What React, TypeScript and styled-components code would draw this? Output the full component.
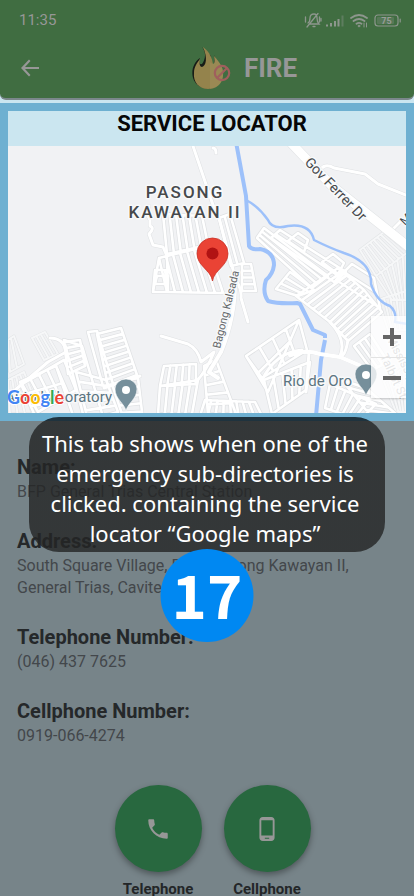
import React from "react";
import styled, { createGlobalStyle } from "styled-components";

const GlobalStyle = createGlobalStyle`
  * { box-sizing: border-box; }
  body { margin: 0; background: #778489; font-family: Roboto, "Liberation Sans", sans-serif; }
  h1, h2, p, dl, dt, dd { margin: 0; }
  button { border: 0; padding: 0; font: inherit; cursor: pointer; }
`;

const Page = styled.div`
  min-height: 100vh;
  overflow: hidden;
  background: #778489;
`;

const Header = styled.header`
  background: #406d41;
  color: #979797;
  border-bottom: 2px solid #7b878b;
  border-radius: 0 0 6px 6px;
  height: 100px;
`;

const StatusBar = styled.div`
  display: flex;
  align-items: center;
  justify-content: space-between;
  height: 40px;
  padding: 0 13px 0 19px;
  font-size: 15px;
  line-height: 20px;
`;

const StatusIcons = styled.svg`
  width: 100px;
  height: 18px;
`;

const AppBar = styled.div`
  display: grid;
  grid-template-columns: 24px 1fr 24px;
  align-items: center;
  padding: 0 16px 0 18px;
  height: 56px;
`;

const BackButton = styled.button`
  display: flex;
  background: none;
  color: inherit;
`;

const Brand = styled.div`
  display: flex;
  align-items: center;
  justify-content: center;
  gap: 13px;
  padding-left: 72px;
`;

const Title = styled.h1`
  font-size: 26px;
  line-height: 32px;
  font-weight: 700;
`;

const HeaderBack = styled.div`
  background: #cbe6f0;
  padding-bottom: 3px;
`;

const Locator = styled.section`
  background: #6eb0d1;
  padding: 8px;
`;

const LocatorTitle = styled.h2`
  background: #cbe6f0;
  color: #060708;
  text-align: center;
  font-size: 22px;
  line-height: 26px;
  padding: 0 0 9px 10px;
  font-weight: 700;
`;

const MapFrame = styled.div`
  position: relative;
  height: 267px;
  overflow: hidden;
  background: #f1f2f4;
`;

const MapDrawing = styled.svg`
  display: block;
  width: 100%;
  height: 100%;
`;

const ZoomControls = styled.div`
  position: absolute;
  right: 0;
  bottom: 15px;
  width: 35px;
  background: rgba(255, 255, 255, 0.78);
  box-shadow: 0 1px 2px rgba(0, 0, 0, 0.2);
`;

const ZoomButton = styled.button`
  display: flex;
  align-items: center;
  justify-content: flex-end;
  width: 100%;
  height: 41px;
  padding-right: 5px;
  background: none;
  color: #666;

  & + & { border-top: 1px solid #e3e3e3; }
`;

const Details = styled.main`
  position: relative;
  padding: 32px 17px 0;
`;

const Contacts = styled.dl`
  display: grid;
  gap: 24px;
`;

const Label = styled.dt`
  color: #25282a;
  font-size: 20px;
  line-height: 28px;
  font-weight: 700;
`;

const Value = styled.dd`
  color: #43474b;
  font-size: 16px;
  line-height: 22px;
`;

const Actions = styled.div`
  display: flex;
  justify-content: center;
  gap: 22px;
  margin-top: 38px;
  padding-left: 11px;
`;

const CallButton = styled.button`
  display: grid;
  justify-items: center;
  gap: 10px;
  width: 87px;
  background: none;
  color: #232628;
  font-size: 15px;
  line-height: 14px;
  font-weight: 700;
  white-space: nowrap;
`;

const Disc = styled.span`
  display: grid;
  place-items: center;
  width: 87px;
  height: 87px;
  border-radius: 50%;
  background: #28683f;
  color: #979797;
  box-shadow: 0 3px 6px rgba(0, 0, 0, 0.35);
`;

const Callout = styled.aside`
  position: absolute;
  top: -4px;
  left: 50%;
  transform: translateX(-50%);
  width: 356px;
  padding: 11px 4px 4px 0;
  border-radius: 30px;
  background: linear-gradient(#1f333e 4px, rgba(35, 36, 36, 0.8) 4px);
  color: #fff;
  text-align: center;
  font-family: "Noto Sans", sans-serif;
  font-size: 22px;
  line-height: 30px;
`;

const Step = styled.div`
  position: absolute;
  top: 128px;
  left: 50%;
  transform: translateX(-50%);
  display: grid;
  place-items: center;
  width: 93px;
  height: 93px;
  padding-bottom: 5px;
  border-radius: 50%;
  background: #0088f2;
  color: #fff;
  font-family: "Noto Sans CJK SC", sans-serif;
  font-size: 60px;
  line-height: 88px;
  font-weight: 700;
`;

type Pt = [number, number];

const mix = (a: Pt, b: Pt, t: number): Pt => [a[0] + (b[0] - a[0]) * t, a[1] + (b[1] - a[1]) * t];

/* Streets of a housing block: the outline a-b-c-d and n lanes running from side ab to side dc. */
function lanes(a: Pt, b: Pt, c: Pt, d: Pt, n: number) {
  let path = `M${a}L${b}L${c}L${d}Z`;
  for (let i = 1; i < n; i++) {
    path += `M${mix(a, b, i / n)}L${mix(d, c, i / n)}`;
  }
  return path;
}

const BLOCKS = [
  lanes([163, 214], [202, 216], [208, 245], [167, 254], 6),
  lanes([159, 258], [208, 246], [223, 293], [167, 292], 7),
  lanes([159, 258], [167, 256], [168, 292], [153, 292], 1),
  lanes([155, 270], [165, 270], [168, 292], [153, 292], 1),
  lanes([157, 276], [168, 276], [168, 284], [155, 284], 1),
  lanes([219, 218], [230, 214], [244, 263], [231, 266], 2),
  lanes([242, 264], [242, 291], [256, 291], [251, 264], 4),
  lanes([264, 228], [257, 238], [312, 288], [328, 276], 3),
  lanes([280, 230], [271, 238], [334, 282], [346, 272], 2),
  lanes([288, 241], [298, 233], [308, 240], [304, 252], 1),
  lanes([322, 262], [333, 254], [344, 263], [338, 274], 1),
  lanes([276, 289], [290, 272], [314, 290], [298, 296], 3),
  lanes([336, 280], [352, 264], [374, 278], [380, 308], 2),
  lanes([296, 296], [330, 322], [364, 290], [338, 268], 6),
  lanes([330, 322], [348, 341], [382, 312], [364, 290], 5),
  lanes([246, 356], [268, 392], [280, 364], [299, 320], 2),
  lanes([246, 356], [299, 320], [307, 350], [262, 378], 4),
  lanes([264, 380], [310, 362], [306, 390], [272, 414], 5),
  lanes([64, 340], [82, 346], [104, 420], [84, 418], 1),
  lanes([88, 332], [97, 331], [113, 384], [103, 386], 1),
  lanes([97, 334], [108, 386], [137, 375], [121, 328], 8),
  lanes([64, 342], [68, 374], [85, 366], [80, 340], 5),
  lanes([22, 384], [64, 360], [76, 390], [38, 412], 5),
  lanes([20, 382], [36, 418], [74, 418], [56, 366], 3),
  lanes([76, 372], [88, 420], [118, 412], [106, 380], 5),
  lanes([112, 384], [124, 420], [143, 420], [138, 378], 5),
  lanes([164, 366], [196, 364], [196, 384], [160, 386], 5),
  lanes([160, 386], [198, 380], [192, 414], [158, 414], 5),
  lanes([204, 366], [208, 414], [236, 414], [216, 360], 5),
  lanes([205, 400], [255, 402], [262, 416], [200, 416], 8),
  lanes([330, 384], [376, 404], [360, 420], [325, 408], 6),
  lanes([342, 380], [366, 410], [396, 414], [366, 388], 4),
  lanes([354, 346], [370, 334], [388, 362], [372, 370], 3),
].join("");

const FAINT = [
  lanes([360, 250], [384, 232], [408, 252], [376, 276], 7),
  lanes([376, 276], [408, 252], [408, 300], [392, 300], 6),
  lanes([32, 338], [45, 332], [58, 354], [44, 360], 3),
  lanes([8, 340], [14, 336], [24, 364], [10, 372], 2),
  lanes([378, 300], [408, 290], [408, 330], [388, 330], 5),
  lanes([384, 382], [408, 364], [408, 412], [396, 412], 5),
  lanes([8, 380], [24, 372], [40, 414], [10, 414], 4),
].join("");

const ROADS =
  "M193 146L213 205L219 218L232 266L236 280M149 206Q146 214 150 220L150 226Q155 228 149 234L153 245L163 247L167 256" +
  "M236 280Q242 290 241 298L248 322M161 336L188 344Q198 349 201 362L214 352M214 352Q207 370 196 382" +
  "M8 396L48 362L66 352M66 352Q64 338 50 338M140 376L104 388" +
  "M290 356Q305 349 320 354L340 357L366 368M348 340Q346 352 343 355M330 322Q347 340 340 356M262 380Q276 352 302 350" +
  "M319 172Q324 162 334 168L365 174L378 184L408 196M388 234L402 220M213 148Q216 148 216 153M309 352L306 392";

const MAIN_ROADS = "M292 144L332 186L380 224L410 248";
const KALSADA = "M235 278Q236 315 221 352L209 372L218 378";
const RIVER =
  "M236 142L246 196L249 246Q251 250 260 249Q274 252 274 265Q273 274 266 280Q262 292 268 301Q278 304 297 303L300 304L313 330L325 335L325 338M325 340L321 360L316 416";
const STREAM = "M246 200Q258 206 268 220Q272 230 288 226Q310 223 314 240Q330 248 344 253Q372 262 371 284Q377 302 390 306Q397 312 395 322L407 324";

function PlacePin({ x, y }: { x: number; y: number }) {
  return (
    <g transform={`translate(${x} ${y})`}>
      <path d="M0 16C-1 9-11 4-11-6A11 10 0 0 1 11-6C11 4 1 9 0 16Z" fill="#768f9b" stroke="#fff" strokeWidth="0.6" />
      <circle cy="-5" r="4" fill="#fff" />
    </g>
  );
}

function StreetMap() {
  return (
    <MapDrawing viewBox="8 146 398 267" preserveAspectRatio="xMidYMid slice" role="img" aria-label="Map of Pasong Kawayan II">
      <rect x="-400" y="146" width="1300" height="267" fill="#f1f2f4" />
      <g fill="none" strokeLinejoin="round" strokeLinecap="round">
        <path d={FAINT} stroke="#e1e3e5" strokeWidth="3" />
        <path d={FAINT} stroke="#f6f7f8" strokeWidth="2" />
        <path d={BLOCKS + ROADS} stroke="#dfe1e3" strokeWidth="4" />
        <path d={BLOCKS} stroke="#fff" strokeWidth="2.6" />
        <path d={ROADS} stroke="#fff" strokeWidth="3" />
        <path d={RIVER} stroke="#9dc1fa" strokeWidth="4" strokeLinecap="butt" />
        <path d={STREAM} stroke="#9dc1fa" strokeWidth="2.4" />
        <path d={KALSADA} stroke="#e2e4e6" strokeWidth="5" />
        <path d={KALSADA} stroke="#fff" strokeWidth="4" />
        <path d={MAIN_ROADS} stroke="#e2e4e6" strokeWidth="10" />
        <path d={MAIN_ROADS} stroke="#fff" strokeWidth="9" />
        <path d="M290 355Q305 349 320 354L340 357L366 368" stroke="#fff" strokeWidth="4" />
      </g>
      <g
        fontFamily="Roboto, sans-serif"
        fill="#46494c"
        stroke="#f8f9fa"
        strokeWidth="3"
        strokeLinejoin="round"
        paintOrder="stroke"
      >
        <g fontSize="17" fontWeight="500" letterSpacing="2" textAnchor="middle">
          <text x="185" y="198">PASONG</text>
          <text x="185" y="218">KAWAYAN II</text>
        </g>
        <text fontSize="14" transform="translate(304 163) rotate(46)">Gov Ferrer Dr</text>
        <text fontSize="11" fill="#66696c" transform="translate(220 349) rotate(-76)">Bagong Kalsada</text>
        <text fontSize="12" transform="translate(405 226) rotate(-45)">M</text>
        <text fontSize="12" fill="#8a8d90" transform="translate(380 356) rotate(65)">Talbot St</text>
        <text fontSize="12" fill="#8a8d90" transform="translate(386 338) rotate(62)">Mississippi</text>
        <text x="283" y="386" fontSize="15" fill="#5b7480">Rio de Oro</text>
        <text x="112" y="402" fontSize="15" fill="#5b7480" textAnchor="end">Auto Laboratory</text>
      </g>
      <PlacePin x={126} y={395} />
      <PlacePin x={366} y={380} />
      <path d="M212.500 281C211 270 197 266 197 253.500A15.500 15.500 0 0 1 228 253.500C228 266 214 270 212.500 281Z" fill="#ea4335" stroke="#c93328" strokeWidth="0.8" />
      <circle cx="212.500" cy="253.500" r="6" fill="#b11313" />
      <text x="7" y="404" fontFamily="Lato, sans-serif" fontSize="18" fontWeight="700" stroke="#fff" strokeWidth="2" paintOrder="stroke">
        <tspan fill="#4285f4">G</tspan>
        <tspan fill="#ea4335">o</tspan>
        <tspan fill="#fbbc05">o</tspan>
        <tspan fill="#4285f4">g</tspan>
        <tspan fill="#34a853">l</tspan>
        <tspan fill="#ea4335">e</tspan>
      </text>
    </MapDrawing>
  );
}

function DeviceStatus() {
  return (
    <StatusIcons viewBox="0 0 100 18" fill="none" stroke="#8d968d" strokeLinecap="round" aria-hidden="true">
      <g transform="translate(3 0)">
        <path d="M6 13L15 13Q13 11 13 7Q13 3 10 3Q6 3 6 7Q6 11 4 12M9 15.500H11M3 16L14 2.500M1.500 6V11M15.500 6V11M17 7.500V10" strokeWidth="1.3" />
      </g>
      <g strokeWidth="2" strokeLinecap="butt">
        <path d="M26 15.500V13.500M30 15.500V12M34 15.500V10M37.500 15.500V8" />
        <path d="M41.500 15.500V4.500" opacity=".4" />
      </g>
      <path d="M50 7Q58 1 66 7M52.500 10Q58 6 63.500 10M55.500 12.700Q58 11 60.500 12.700" strokeWidth="1.800" />
      <circle cx="58" cy="15" r="1" fill="#8d968d" strokeWidth="0.5" />
      <path d="M63 12V16M65.500 12V16" strokeWidth="1" />
      <rect x="74" y="4" width="23" height="11" rx="3" strokeWidth="1.2" />
      <rect x="76" y="6" width="17" height="7" rx="1" fill="#8d968d" opacity=".3" stroke="none" />
      <path d="M99.200 8V11" strokeWidth="1.200" />
      <text x="85.500" y="13" textAnchor="middle" fontSize="9" fontWeight="700" fontFamily="Roboto, sans-serif" fill="#979d97" stroke="none">
        75
      </text>
    </StatusIcons>
  );
}

function FlameLogo() {
  return (
    <svg width="40" height="44" viewBox="0 0 40 44" aria-hidden="true">
      <path d="M11 1C16 7 14 14 11 18C8 19 8 15 9 12C0 18-2 33 8 40Q14 44 22 42L20 10Z" fill="#171c17" />
      <path d="M23 9Q24 12 23 18L27 17Q25 14 23 9Z" fill="#171c17" />
      <path d="M12 1C20 7 21 13 22 18C24 18 24 14 23 10C29 17 33 22 32 30C31 38 25 43 17 43C8 43 2 36 3 27C3 21 6 17 9 13C8 18 9 21 11 21C15 20 17 12 12 1Z" fill="#94834c" />
      <path d="M19 16L22 18C24 18 24 14 23 10C29 17 33 22 32 30C31 38 25 43 19 43Z" fill="#a08f5c" opacity=".5" />
      <g fill="none" stroke="#a05f5d" strokeWidth="2.200">
        <circle cx="31" cy="27" r="7.200" />
        <path d="M26 32L36 22" />
      </g>
    </svg>
  );
}

const CONTACTS = [
  { label: "Name:", lines: ["BFP General Trias Central Station"] },
  { label: "Address:", lines: ["South Square Village, Brgy. Pasong Kawayan II,", "General Trias, Cavite"] },
  { label: "Telephone Number:", lines: ["(046) 437 7625"] },
  { label: "Cellphone Number:", lines: ["0919-066-4274"] },
];

export default function App() {
  return (
    <Page>
      <GlobalStyle />
      <HeaderBack>
        <Header>
          <StatusBar>
            <span>11:35</span>
            <DeviceStatus />
          </StatusBar>
          <AppBar>
            <BackButton aria-label="Back">
              <svg width="24" height="24" viewBox="0 0 24 24" fill="currentColor">
                <path d="M21 11H7L12.500 5L11 3.500L3 12L11 20.500L12.500 19L7 13H21Z" />
              </svg>
            </BackButton>
            <Brand>
              <FlameLogo />
              <Title>FIRE</Title>
            </Brand>
          </AppBar>
        </Header>
      </HeaderBack>
      <Locator>
        <LocatorTitle>SERVICE LOCATOR</LocatorTitle>
        <MapFrame>
          <StreetMap />
          <ZoomControls>
            <ZoomButton aria-label="Zoom in">
              <svg width="18" height="18" viewBox="0 0 18 18" stroke="currentColor" strokeWidth="4">
                <path d="M0 9H18M9 0V18" />
              </svg>
            </ZoomButton>
            <ZoomButton aria-label="Zoom out">
              <svg width="18" height="18" viewBox="0 0 18 18" stroke="currentColor" strokeWidth="4">
                <path d="M0 9H18" />
              </svg>
            </ZoomButton>
          </ZoomControls>
        </MapFrame>
      </Locator>
      <Details>
        <Contacts>
          {CONTACTS.map(({ label, lines }) => (
            <div key={label}>
              <Label>{label}</Label>
              {lines.map((line) => (
                <Value key={line}>{line}</Value>
              ))}
            </div>
          ))}
        </Contacts>
        <Actions>
          <CallButton>
            <Disc>
              <svg width="26" height="26" viewBox="0 0 24 24" fill="currentColor">
                <path d="M6.620 10.790c1.440 2.830 3.760 5.140 6.590 6.590l2.200-2.200c.27-.27.67-.36 1.020-.24 1.120.37 2.330.57 3.570.57.55 0 1 .45 1 1V20c0 .55-.45 1-1 1-9.390 0-17-7.610-17-17 0-.55.45-1 1-1h3.500c.55 0 1 .45 1 1 0 1.250.2 2.450.57 3.570.11.35.03.74-.25 1.020l-2.200 2.200z" />
              </svg>
            </Disc>
            Telephone
          </CallButton>
          <CallButton>
            <Disc>
              <svg width="26" height="26" viewBox="0 0 24 24" fill="currentColor">
                <path d="M16 1H8C6.340 1 5 2.340 5 4v16c0 1.660 1.340 3 3 3h8c1.660 0 3-1.340 3-3V4c0-1.660-1.340-3-3-3zm-2 20h-4v-1h4v1zm3.250-3H6.750V4h10.500v14z" />
              </svg>
            </Disc>
            Cellphone
          </CallButton>
        </Actions>
        <Callout>
          <p>
            This tab shows when one of the
            <br />
            emergency sub-directories is
            <br />
            clicked. containing the service
            <br />
            locator “Google maps”
          </p>
        </Callout>
        <Step>17</Step>
      </Details>
    </Page>
  );
}
